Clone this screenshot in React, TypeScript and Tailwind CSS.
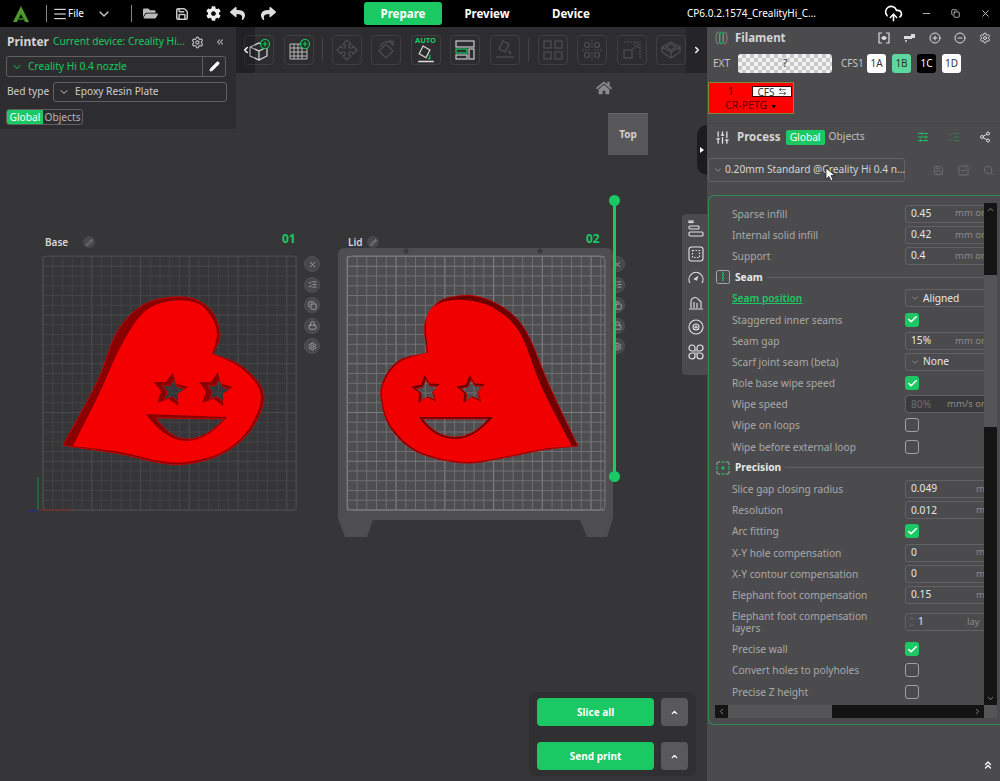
import React from "react";
import {
  Menu, ChevronDown, Save, Settings, CloudUpload, Minus, Copy, X,
  Pencil, Check, ChevronUp, ChevronLeft, ChevronRight, Search, CirclePlus, CircleMinus,
  SlidersVertical, ChevronsUp, ChevronsLeft, ArrowLeftRight, Share2, ListChecks, Lock,
} from "lucide-react";
import { FaCog, FaFolderOpen, FaHome, FaReply, FaShare } from "react-icons/fa";

type P = [number, number];

function smooth(pts: P[]): string {
  let d = "";
  for (let i = 0; i < pts.length - 1; i++) {
    const p0 = pts[i - 1] || pts[i];
    const p1 = pts[i];
    const p2 = pts[i + 1];
    const p3 = pts[i + 2] || p2;
    const c1 = [p1[0] + (p2[0] - p0[0]) / 6, p1[1] + (p2[1] - p0[1]) / 6];
    const c2 = [p2[0] - (p3[0] - p1[0]) / 6, p2[1] - (p3[1] - p1[1]) / 6];
    d += `C${c1[0].toFixed(1)} ${c1[1].toFixed(1)} ${c2[0].toFixed(1)} ${c2[1].toFixed(1)} ${p2[0]} ${p2[1]}`;
  }
  return d;
}
const closed = (...segs: P[][]) => `M${segs[0][0][0]} ${segs[0][0][1]}` + segs.map(smooth).join("") + "Z";

function star(cx: number, cy: number, r: number, rot: number) {
  let d = "";
  for (let i = 0; i < 10; i++) {
    const a = rot + (i * Math.PI) / 5 - Math.PI / 2;
    const rr = i % 2 ? r * 0.5 : r;
    d += `${i ? "L" : "M"}${(cx + rr * Math.cos(a)).toFixed(1)} ${(cy + rr * Math.sin(a)).toFixed(1)}`;
  }
  return d + "Z";
}

function Grid({ x0, y0, x1, y1, thin, bold }: { x0: number; y0: number; x1: number; y1: number; thin: string; bold: string }) {
  const step = 9.75;
  const lines: React.ReactNode[] = [];
  for (let i = 0; x0 + i * step <= x1 + 0.5; i++) {
    const x = x0 + i * step;
    lines.push(<line key={"v" + i} x1={x} x2={x} y1={y0} y2={y1} stroke={i % 5 === 0 ? bold : thin} strokeWidth={i % 5 === 0 ? 1.2 : 1} />);
  }
  for (let i = 0; y1 - i * step >= y0 - 0.5; i++) {
    const y = y1 - i * step;
    lines.push(<line key={"h" + i} y1={y} y2={y} x1={x0} x2={x1} stroke={i % 5 === 0 ? bold : thin} strokeWidth={i % 5 === 0 ? 1.2 : 1} />);
  }
  return <g>{lines}<rect x={x0} y={y0} width={x1 - x0} height={y1 - y0} rx={5} fill="none" stroke={bold} strokeWidth={1} /></g>;
}

function Hearts() {
  const baseSil = closed(
    [[63, 445], [97, 382], [117, 332], [143, 305], [173, 297], [197, 300], [213, 313], [220, 335], [213, 354]],
    [[213, 354], [240, 365], [260, 385], [263, 405], [247, 435], [220, 455], [187, 464], [160, 463], [120, 454], [73, 447], [63, 445]]
  );
  const baseFace = closed(
    [[73, 446], [100, 392], [120, 348], [143, 313], [170, 301], [197, 303], [212, 318], [217, 335], [212, 354]],
    [[212, 354], [238, 366], [257, 385], [260, 405], [245, 434], [220, 453], [187, 462], [160, 461], [120, 452], [73, 446]]
  );
  const baseMouthOuter = "M146 414L227 417C215 432 200 441 187 441C172 441 157 430 146 414Z";
  const baseMouthInner = "M156 418L224 419C212 432 200 439 187 439C174 439 165 430 156 418Z";
  const lidSil = closed(
    [[578, 446], [550, 387], [527, 333], [507, 310], [480, 297], [457, 296], [437, 303], [425, 323], [427, 353]],
    [[427, 353], [400, 360], [385, 377], [381, 397], [390, 427], [417, 452], [463, 463], [503, 458], [543, 450], [578, 446]]
  );
  const lidFace = closed(
    [[572, 446], [543, 390], [520, 333], [497, 310], [477, 302], [453, 300], [433, 307], [426, 323], [428, 353]],
    [[428, 353], [401, 361], [386, 378], [382, 397], [391, 426], [418, 451], [463, 462], [503, 457], [543, 449], [572, 446]]
  );
  const lidMouthOuter = "M419 417L493 417C480 432 468 439 455 439C440 439 427 430 419 417Z";
  const lidMouthInner = "M423 419L488 419C478 431 467 437 455 437C442 437 431 430 423 419Z";
  return (
    <>
      <path fillRule="evenodd" fill="#8a0000" stroke="#d80000" strokeWidth={0.8}
        d={baseSil + star(173, 391, 12, 0.15) + star(218, 391, 12, 0.15) + baseMouthInner} />
      <path fillRule="evenodd" fill="#f50000"
        d={baseFace + star(170, 390, 18, 0.15) + star(215, 390, 18, 0.15) + baseMouthOuter} />
      <path fillRule="evenodd" fill="#6e0000" stroke="#d00000" strokeWidth={0.8}
        d={lidSil + star(427, 391, 11.5, -0.1) + star(472, 391, 11.5, -0.1) + lidMouthInner} />
      <path fillRule="evenodd" fill="#f00000"
        d={lidFace + star(426, 390, 15, -0.1) + star(471, 390, 15, -0.1) + lidMouthOuter} />
    </>
  );
}

function Scene() {
  return (
    <svg className="absolute left-0 top-[-27px]" width={707} height={781} viewBox="0 0 707 781">
      <Grid x0={43} y0={256} x1={296} y1={510} thin="#434345" bold="#4a4a4d" />
      <line x1={38} y1={510} x2={38} y2={477} stroke="#1d8a3c" strokeWidth={1} />
      <line x1={38} y1={510} x2={70} y2={510} stroke="#8a2020" strokeWidth={1} />
      <line x1={38} y1={510} x2={27} y2={512} stroke="#2030a0" strokeWidth={1.2} />
      <path d="M345 248H606Q613 248 613 255V518L607 537H587L580 520H373L367 537H345L338 518V255Q338 248 345 248Z" fill="#4e4e50" />
      <circle cx={406} cy={251} r={2.5} fill="#3a3a3c" />
      <circle cx={540} cy={251} r={2.5} fill="#3a3a3c" />
      <Grid x0={347.3} y0={256} x1={605} y1={510} thin="#707073" bold="#7d7d80" />
      <Hearts />
    </svg>
  );
}

const CIRCLE_YS = [
  { k: "x", i: <X size={9} /> },
  { k: "a", i: <ListChecks size={9} /> },
  { k: "b", i: <Copy size={9} /> },
  { k: "c", i: <Lock size={9} /> },
  { k: "d", i: <Settings size={9} /> },
];

function PlateButtons({ className }: { className: string }) {
  return (
    <div className={"absolute flex flex-col gap-[4.5px] " + className}>
      {CIRCLE_YS.map((c) => (
        <div key={c.k} className="w-4 h-4 rounded-full bg-[#48484a] border border-[#525254] flex items-center justify-center text-[#b5b5b5]">{c.i}</div>
      ))}
    </div>
  );
}

function TB({ children, dim }: { children: React.ReactNode; dim?: boolean }) {
  return (
    <div className={"w-[30px] h-[30px] shrink-0 rounded-[4px] border border-[#404042] flex items-center justify-center " + (dim ? "text-[#4f4f52]" : "text-[#d8d8d8]")}>
      {children}
    </div>
  );
}

function Toolbar() {
  return (
    <div className="absolute left-[236px] top-0 w-[471px] h-[46px] bg-[#2d2d2f] flex items-center">
      <div className="w-[8px] h-full shrink-0" />
      <div className="flex items-center gap-[9.5px]">
        <TB>
          <svg width="24" height="24" viewBox="0 0 24 24" fill="none" stroke="#ddd" strokeWidth="1.2">
            <path d="M3 9l9-4 8 4v9l-8 4-9-4z M3 9l9 4 8-4 M12 13v9" />
            <circle cx="18" cy="6" r="4.5" fill="#1f2f25" stroke="#1ac964" />
            <path d="M18 3.5v5M15.5 6h5" stroke="#1ac964" />
          </svg>
        </TB>
        <TB>
          <svg width="24" height="24" viewBox="0 0 24 24" fill="none" stroke="#bbb" strokeWidth="1">
            <path d="M3 6h17v15H3zM3 10h17M3 14h17M3 18h17M7 6v15M11 6v15M15 6v15" />
            <circle cx="18" cy="6" r="4.5" fill="#1f2f25" stroke="#1ac964" strokeWidth="1.2" />
            <path d="M18 3.5v5M15.5 6h5" stroke="#1ac964" strokeWidth="1.2" />
          </svg>
        </TB>
        <div className="w-px h-[24px] bg-[#444446] -mx-[1px]" />
        <TB dim>
          <svg width="22" height="22" viewBox="0 0 22 22" fill="none" stroke="currentColor" strokeWidth="1.2">
            <path d="M11 1l4 4-2 1v3h3l1-2 4 4-4 4-1-2h-3v3l2 1-4 4-4-4 2-1v-3H6l-1 2-4-4 4-4 1 2h3V6L7 5z" />
          </svg>
        </TB>
        <TB dim>
          <svg width="22" height="22" viewBox="0 0 22 22" fill="none" stroke="currentColor" strokeWidth="1.2">
            <path d="M4 12l7-7 7 7-7 7z" /><path d="M5 8a8 8 0 0 1 10-5" /><path d="M14 2h4v4z" />
          </svg>
        </TB>
        <div className="w-[30px] h-[30px] shrink-0 rounded-[4px] border border-[#404042] flex flex-col items-center leading-none overflow-hidden">
          <span className="text-[7.5px] font-bold text-[#1ac964] mt-[1px]">AUTO</span>
          <svg width="24" height="20" viewBox="0 0 24 20" fill="none" stroke="#ddd" strokeWidth="1.2">
            <path d="M9 1l7 4-4 8-7-4z" /><path d="M4 17h16" strokeWidth="1.5" /><path d="M16 10v4h-2" stroke="#1ac964" />
          </svg>
        </div>
        <TB>
          <svg width="22" height="22" viewBox="0 0 22 22" fill="none" stroke="#ccc" strokeWidth="1.2">
            <rect x="2" y="2" width="18" height="6" />
            <rect x="2" y="10" width="11" height="4" stroke="#1ac964" />
            <rect x="2" y="16" width="11" height="4" />
            <rect x="15" y="10" width="5" height="10" />
          </svg>
        </TB>
        <TB dim>
          <svg width="22" height="22" viewBox="0 0 22 22" fill="none" stroke="currentColor" strokeWidth="1.2">
            <path d="M9 2l6 3-4 8-6-3z" /><path d="M2 18h18" /><path d="M14 12l3 2-2 1" />
          </svg>
        </TB>
        <div className="w-px h-[24px] bg-[#444446] -mx-[1px]" />
        <TB dim>
          <svg width="22" height="22" viewBox="0 0 22 22" fill="none" stroke="currentColor" strokeWidth="1.2">
            <rect x="2" y="2" width="7" height="7" /><rect x="13" y="2" width="7" height="7" /><rect x="2" y="13" width="7" height="7" /><rect x="13" y="13" width="7" height="7" />
          </svg>
        </TB>
        <TB dim>
          <svg width="22" height="22" viewBox="0 0 22 22" fill="none" stroke="currentColor" strokeWidth="1.2">
            <circle cx="6" cy="6" r="2.5" /><circle cx="16" cy="6" r="2.5" /><circle cx="6" cy="16" r="2.5" /><circle cx="16" cy="16" r="2.5" /><path d="M1 11h8M13 11h8M11 1v8M11 13v8" strokeDasharray="2 1" />
          </svg>
        </TB>
        <TB dim>
          <svg width="22" height="22" viewBox="0 0 22 22" fill="none" stroke="currentColor" strokeWidth="1.2">
            <rect x="3" y="11" width="8" height="8" /><path d="M3 3h16v16M12 10l5-5M13 5h4v4" strokeDasharray="2 1" />
          </svg>
        </TB>
        <TB dim>
          <svg width="22" height="22" viewBox="0 0 22 22" fill="none" stroke="currentColor" strokeWidth="1.2">
            <path d="M2 8l9-5 9 5-9 5zM2 8v5l9 6 9-6V8M6 8l5-3 5 3-5 3zM11 13v6" />
          </svg>
        </TB>
      </div>
      <div className="absolute right-0 top-0 w-[21px] h-full bg-[#252527] flex items-center pl-[6px] text-white"><ChevronRight size={10} strokeWidth={3.5} /></div>
      <div className="absolute left-0 top-0 w-[19px] h-full bg-black/25 flex items-center pl-[5px] text-white"><ChevronLeft size={10} strokeWidth={3.5} /></div>
    </div>
  );
}

function LeftPanel() {
  return (
    <div className="absolute left-0 top-0 w-[236px] h-[102px] bg-[#2d2d2f] px-[6px] pt-[6px] flex flex-col">
      <div className="flex items-center h-[18px] whitespace-nowrap">
        <span className="text-[12px] font-bold text-[#d4d4d4] ml-[1px] w-[46px]">Printer</span>
        <span className="text-[10.2px] text-[#1ac964] w-[133px]">Current device: Creality Hi...</span>
        <Settings size={13} className="text-[#c5c5c5] ml-[5px]" />
        <ChevronsLeft size={10} strokeWidth={2.5} className="text-[#bbb] ml-[11px]" />
      </div>
      <div className="flex mt-[5px] h-[21px] w-[220px] border border-[#606062] rounded-[3px] items-center">
        <ChevronDown size={12} className="text-[#1ac964] ml-[4px]" />
        <span className="text-[10.2px] text-[#1ac964] ml-[5px] flex-1">Creality Hi 0.4 nozzle</span>
        <div className="w-[23px] h-full border-l border-[#606062] flex items-center justify-center"><Pencil size={11} className="text-white" fill="white" /></div>
      </div>
      <div className="flex items-center mt-[5px] h-[20px]">
        <span className="text-[10.2px] text-[#cfcfcf] ml-[1px] w-[46px]">Bed type</span>
        <div className="flex items-center h-full w-[174px] border border-[#606062] rounded-[3px]">
          <ChevronDown size={12} className="text-[#ccc] ml-[4px]" />
          <span className="text-[10.2px] text-[#cfcfcf] ml-[5px]">Epoxy Resin Plate</span>
        </div>
      </div>
      <div className="flex mt-[7px] h-[16px] w-[77px] text-[10.2px] leading-[14px] rounded-[3px] border border-[#606062]">
        <span className="bg-[#1ac964] text-white w-[36px] text-center rounded-l-[2px]">Global</span>
        <span className="text-[#b5b5b5] flex-1 text-center">Objects</span>
      </div>
    </div>
  );
}

function Canvas() {
  return (
    <div className="relative w-[707px] h-full bg-[#363638] overflow-hidden shrink-0">
      <Scene />
      <Toolbar />
      <LeftPanel />
      <div className="absolute left-[45px] top-[210px] text-[10px] font-semibold text-[#d8d8d8] leading-none">Base</div>
      <div className="absolute left-[83px] top-[209px] w-3 h-3 rounded-full bg-[#48484a] flex items-center justify-center text-[#999]"><Pencil size={7} /></div>
      <div className="absolute left-[282px] top-[206px] text-[12px] font-bold text-[#1ac964] leading-none">01</div>
      <div className="absolute left-[348px] top-[210px] text-[10px] font-semibold text-[#d8d8d8] leading-none">Lid</div>
      <div className="absolute left-[367px] top-[209px] w-3 h-3 rounded-full bg-[#48484a] flex items-center justify-center text-[#aaa]"><Pencil size={7} /></div>
      <div className="absolute left-[586px] top-[206px] text-[12px] font-bold text-[#1ac964] leading-none">02</div>
      <PlateButtons className="left-[304px] top-[229px]" />
      <PlateButtons className="left-[609px] top-[229px]" />
      <div className="absolute left-[613px] top-[174px] w-[3px] h-[275px] bg-[#1ac964]" />
      <div className="absolute left-[609px] top-[168px] w-[11px] h-[11px] rounded-full bg-[#1ac964]" />
      <div className="absolute left-[609px] top-[444px] w-[11px] h-[11px] rounded-full bg-[#1ac964]" />
      <FaHome size={16} className="absolute left-[596px] top-[53px] text-[#8a8a8a]" />
      <div className="absolute left-[608px] top-[86px] w-[40px] h-[42px] bg-[#58585a] border-t border-[#6a6a6c] flex items-center justify-center text-[10px] font-bold text-[#d0d0d0]">Top</div>
      <div className="absolute left-[697px] top-[98px] w-[20px] h-[50px] rounded-full bg-[#1c1c1e] flex items-center pl-[3px]">
        <div className="w-0 h-0 border-y-[3px] border-y-transparent border-l-[4px] border-l-white" />
      </div>
      <div className="absolute left-[682px] top-[187px] w-[25px] h-[161px] bg-[#4b4b4d] rounded-l-[4px] flex flex-col items-center text-[#e5e5e5] gap-[9px] pt-[6px] pl-[2px]">
        <svg width="16" height="17" viewBox="0 0 16 17" fill="none" stroke="currentColor" strokeWidth="1.1"><rect x="1" y="1" width="4" height="1.5" /><rect x="1" y="6" width="10" height="3" rx="1" /><rect x="1" y="12" width="14" height="4" rx="1" /></svg>
        <svg width="16" height="16" viewBox="0 0 16 16" fill="none" stroke="currentColor" strokeWidth="1.1"><rect x="1" y="1" width="14" height="14" rx="2.5" /><rect x="4.5" y="4.5" width="7" height="7" strokeDasharray="1.5 1.5" /></svg>
        <svg width="16" height="14" viewBox="0 0 16 14" fill="none" stroke="currentColor" strokeWidth="1.1"><path d="M2 12a7 7 0 1 1 12 0" /><path d="M6.5 8l3-2-1 3z" /></svg>
        <svg width="16" height="16" viewBox="0 0 16 16" fill="none" stroke="currentColor" strokeWidth="1.1"><path d="M1 15h14M3 14V7a4 4 0 0 1 7-2l3 3v6M6 14V8M9 14V9" /></svg>
        <svg width="16" height="16" viewBox="0 0 16 16" fill="none" stroke="currentColor" strokeWidth="1.1"><circle cx="8" cy="8" r="7" /><circle cx="8" cy="8" r="3" /><circle cx="8" cy="8" r="1" /></svg>
        <svg width="16" height="16" viewBox="0 0 16 16" fill="none" stroke="currentColor" strokeWidth="1.2"><path d="M7 7H4a3 3 0 1 1 3-3zM9 7V4a3 3 0 1 1 3 3zM7 9v3a3 3 0 1 1-3-3zM9 9h3a3 3 0 1 1-3 3z" /></svg>
      </div>
      <div className="absolute left-[529px] top-[665px] w-[167px] flex flex-col gap-[4px] bg-[#303032] rounded-[6px]">
        {["Slice all", "Send print"].map((t) => (
          <div key={t} className="flex items-center h-[40px] px-[8px] gap-[7px]">
            <div className="w-[118px] h-[28px] rounded-[4px] bg-[#1ac964] flex items-center justify-center text-[10px] font-bold text-white">{t}</div>
            <div className="w-[27px] h-[28px] rounded-[4px] bg-[#59595b] flex items-center justify-center text-white"><ChevronUp size={9} strokeWidth={3.5} /></div>
          </div>
        ))}
      </div>
    </div>
  );
}

function Slot({ t, cls }: { t: string; cls: string }) {
  return <div className={"w-[19px] h-[19px] rounded-[3px] flex items-center justify-center text-[10px] " + cls}>{t}</div>;
}

function Label({ children, extra }: { children: React.ReactNode; extra?: string }) {
  return <div className={"w-[190px] pl-[17px] pr-[36px] text-[10.2px] leading-[12px] text-[#a9a9a9] shrink-0 " + (extra || "")}>{children}</div>;
}

function NumRow({ label, value, unit, vw, dim }: { label: string; value: string; unit: string; vw: string; dim?: boolean }) {
  return (
    <div className="flex items-center h-[21.2px]">
      <Label>{label}</Label>
      <div className={"w-[90px] h-[18px] shrink-0 rounded-[3px] border border-[#626264] flex items-center pl-[5px] text-[10.2px] whitespace-nowrap " + (dim ? "bg-[#3a3a3c] text-[#6e6e70]" : "text-[#e8e8e8]")}>
        <span className={"shrink-0 " + vw}>{value}</span>
        <span className="text-[#8a8a8c] text-[9.5px]">{unit}</span>
      </div>
    </div>
  );
}

function CheckRow({ label, on }: { label: string; on?: boolean }) {
  return (
    <div className="flex items-center h-[21.2px]">
      <Label>{label}</Label>
      {on ? (
        <div className="w-[14px] h-[14px] rounded-[3px] bg-[#1ac964] flex items-center justify-center"><Check size={11} strokeWidth={3.5} className="text-white" /></div>
      ) : (
        <div className="w-[14px] h-[14px] rounded-[3px] border border-[#a0a0a0]" />
      )}
    </div>
  );
}

function SelectRow({ label, value, green }: { label: string; value: string; green?: boolean }) {
  return (
    <div className="flex items-center h-[21.2px]">
      <Label extra={green ? "!text-[#1ac964] underline font-semibold" : ""}>{label}</Label>
      <div className="w-[90px] h-[18px] shrink-0 rounded-[3px] border border-[#626264] flex items-center pl-[4px] text-[10.2px] text-[#e8e8e8]">
        <ChevronDown size={10} className="text-[#999]" />
        <span className="ml-[3px]">{value}</span>
      </div>
    </div>
  );
}

function SectionHead({ title, children }: { title: string; children: React.ReactNode }) {
  return (
    <div className="flex items-center h-[21.2px] pl-[1px]">
      <div className="w-[14px] h-[14px] flex items-center justify-center">{children}</div>
      <span className="ml-[5px] text-[10.2px] font-bold text-[#e8e8e8]">{title}</span>
      <div className="flex-1 h-px bg-[#626264] ml-[4px]" />
    </div>
  );
}

function Sidebar() {
  return (
    <div className="flex-1 h-full bg-[#4b4b4d] flex flex-col relative">
      <div className="h-[21px] flex items-center pl-[8px] text-[#d5d5d5]">
        <svg width="13" height="14" viewBox="0 0 13 14" fill="none" stroke="#1ac964" strokeWidth="1"><ellipse cx="3" cy="7" rx="2" ry="6" stroke="#888" /><ellipse cx="6.5" cy="7" rx="2" ry="6" /><ellipse cx="10" cy="7" rx="2" ry="6" stroke="#888" /></svg>
        <span className="ml-[7px] text-[11.5px] font-bold">Filament</span>
        <div className="ml-auto flex items-center gap-[13px] pr-[9px] text-[#dcdcdc]">
          <svg width="12" height="12" viewBox="0 0 12 12" fill="none" stroke="currentColor" strokeWidth="1.2"><path d="M4 1H1v10h3M8 1h3v10H8M3 6h6" /><circle cx="6" cy="6" r="1.5" fill="currentColor" /></svg>
          <svg width="13" height="12" viewBox="0 0 13 12" fill="currentColor"><path d="M1 4h7V2h4v4H9v1H1zM2 8h2l-1 3z" /></svg>
          <CirclePlus size={12} />
          <CircleMinus size={12} />
          <Settings size={12} />
        </div>
      </div>
      <div className="flex items-center h-[19px] mt-[6px] text-[10px] text-[#c5c5c5]">
        <span className="ml-[6px] w-[25px]">EXT</span>
        <div className="w-[94px] h-[19px] rounded-[3px] bg-[repeating-conic-gradient(#c8c8c8_0_25%,#f2f2f2_0_50%)] bg-[length:8px_8px] flex items-center justify-center text-[#333]">?</div>
        <span className="ml-[9px] w-[26px]">CFS1</span>
        <div className="flex gap-[6px]">
          <Slot t="1A" cls="bg-white text-[#333]" />
          <Slot t="1B" cls="bg-[#5ed6a0] text-[#1d3b2c]" />
          <Slot t="1C" cls="bg-black text-white" />
          <Slot t="1D" cls="bg-white text-[#333]" />
        </div>
      </div>
      <div className="mt-[9px] ml-[1px] w-[86px] h-[32px] bg-[#ff0000] border border-[#7f8a3a] relative text-[10px] flex flex-col">
        <div className="flex h-[15px] items-center pt-[2px]">
          <span className="w-[43px] text-center text-[#300]">1</span>
          <div className="w-[40px] h-[11px] bg-white border border-[#400] flex items-center justify-center gap-[3px] text-[#333] leading-none">CFS <ArrowLeftRight size={9} /></div>
        </div>
        <div className="text-center text-[#5a0000] leading-[15px] text-[10.5px]">CR-PETG <span className="text-black text-[7px]">▼</span></div>
      </div>
      <div className="h-px bg-[#444446] mt-[9px]" />
      <div className="flex items-center h-[26px] pl-[8px]">
        <SlidersVertical size={15} className="text-[#e8e8e8]" />
        <span className="ml-[7px] text-[11.5px] font-bold text-[#d5d5d5]">Process</span>
        <span className="ml-[5px] w-[39px] h-[15px] rounded-[2px] bg-[#1ac964] text-white text-[10.2px] leading-[15px] text-center">Global</span>
        <span className="ml-[4px] text-[10.2px] text-[#c0c0c0]">Objects</span>
        <div className="ml-auto flex items-center gap-[19px] pr-[9px]">
          <SlidersVertical size={12} className="text-[#1ac964] rotate-90" />
          <ListChecks size={12} className="text-[#1ac964] opacity-40" />
          <Share2 size={12} className="text-[#dcdcdc]" />
        </div>
      </div>
      <div className="flex items-center mt-[8px] h-[24px]">
        <div className="w-[197px] ml-[1px] h-full rounded-[3px] border border-[#626264] flex items-center pl-[4px] text-[10.2px] text-[#d5d5d5] whitespace-nowrap">
          <ChevronDown size={10} className="text-[#999] shrink-0" />
          <span className="ml-[2px]">0.20mm Standard @Creality Hi 0.4 n...</span>
        </div>
        <div className="ml-auto flex gap-[14px] pr-[6px] text-[#6f6f71]">
          <Save size={11} /><svg width="11" height="11" viewBox="0 0 11 11" fill="none" stroke="currentColor"><rect x="1" y="1" width="9" height="9" rx="1" /><path d="M3 5.5h5" /></svg><Search size={11} />
        </div>
      </div>
      <div className="mt-[13px] ml-[1px] w-[292px] h-[530px] rounded-tl-[6px] rounded-bl-[6px] border border-r-0 border-[#2f8a55] pl-[6px] pt-[7px] flex flex-col relative">
        <div className="flex flex-1 min-h-0">
          <div className="w-[269px] overflow-hidden">
            <NumRow label="Sparse infill" value="0.45" unit="mm or" vw="w-[44px]" />
            <NumRow label="Internal solid infill" value="0.42" unit="mm or" vw="w-[44px]" />
            <NumRow label="Support" value="0.4" unit="mm or" vw="w-[44px]" />
            <SectionHead title="Seam">
              <svg width="14" height="14" viewBox="0 0 14 14" fill="none"><rect x="0.5" y="0.5" width="13" height="13" rx="2" stroke="#a8a8a8" /><path d="M6 2l2 1.5-2 1.5 2 1.5-2 1.5 2 1.5-2 1.5" stroke="#1ac964" /></svg>
            </SectionHead>
            <SelectRow label="Seam position" value="Aligned" green />
            <CheckRow label="Staggered inner seams" on />
            <NumRow label="Seam gap" value="15%" unit="mm or" vw="w-[44px]" />
            <SelectRow label="Scarf joint seam (beta)" value="None" />
            <CheckRow label="Role base wipe speed" on />
            <NumRow label="Wipe speed" value="80%" unit="mm/s or" vw="w-[36px]" dim />
            <CheckRow label="Wipe on loops" />
            <CheckRow label="Wipe before external loop" />
            <SectionHead title="Precision">
              <svg width="14" height="14" viewBox="0 0 14 14" fill="none"><path d="M1 4V2a1 1 0 0 1 1-1h2M10 1h2a1 1 0 0 1 1 1v2M13 10v2a1 1 0 0 1-1 1h-2M4 13H2a1 1 0 0 1-1-1v-2" stroke="#a8a8a8" /><path d="M5 1h4M5 13h4M1 5v4M13 5v4M7 5v4M5 7h4" stroke="#1ac964" /></svg>
            </SectionHead>
            <NumRow label="Slice gap closing radius" value="0.049" unit="m" vw="w-[65px]" />
            <NumRow label="Resolution" value="0.012" unit="m" vw="w-[65px]" />
            <CheckRow label="Arc fitting" on />
            <NumRow label="X-Y hole compensation" value="0" unit="m" vw="w-[65px]" />
            <NumRow label="X-Y contour compensation" value="0" unit="m" vw="w-[65px]" />
            <NumRow label="Elephant foot compensation" value="0.15" unit="m" vw="w-[65px]" />
            <div className="flex items-center h-[33px]">
              <Label>Elephant foot compensation layers</Label>
              <div className="w-[90px] h-[18px] shrink-0 rounded-[3px] border border-[#626264] flex items-center pl-[2px] text-[10.2px] text-[#e8e8e8] whitespace-nowrap">
                <div className="flex flex-col text-[#888] mr-[3px]"><ChevronUp size={7} /><ChevronUp size={7} className="rotate-180" /></div>
                <span className="w-[49px]">1</span>
                <span className="text-[#8a8a8c] text-[9.5px]">lay</span>
              </div>
            </div>
            <CheckRow label="Precise wall" on />
            <CheckRow label="Convert holes to polyholes" />
            <CheckRow label="Precise Z height" />
          </div>
          <div className="w-[13px] bg-[#141414] flex flex-col items-center justify-between relative shrink-0">
            <ChevronUp size={9} className="text-[#aaa] mt-[2px]" />
            <ChevronDown size={9} className="text-[#aaa] mb-[2px]" />
            <div className="absolute top-[72px] h-[152px] w-full bg-[#555557]" />
          </div>
        </div>
        <div className="flex h-[13px] mb-[6px] shrink-0">
          <div className="w-[269px] bg-[#141414] flex items-center justify-between relative px-[2px] text-[#aaa]">
            <ChevronLeft size={9} /><ChevronRight size={9} />
            <div className="absolute left-[13px] w-[104px] h-full bg-[#555557]" />
          </div>
          <div className="w-[13px] bg-[#555557]" />
        </div>
      </div>
      <ChevronsUp size={12} className="absolute left-[275px] top-[732px] text-white" strokeWidth={2.5} />
      <svg className="absolute left-[118px] top-[140px]" width="11" height="15" viewBox="0 0 11 15">
        <path d="M1 1v11l3-2.5 2 4.5 2-1-2-4.5h4z" fill="white" stroke="#222" strokeWidth="0.8" />
      </svg>
    </div>
  );
}

function TopBar() {
  return (
    <div className="h-[27px] bg-black flex items-center text-white relative shrink-0">
      <svg width="18" height="18" viewBox="0 0 18 18" className="ml-[12px]" fill="none">
        <path d="M9 1L1 17h4l4-8 4 8h4z" fill="#4d9a2c" /><path d="M6 13h6l1 2H5z" fill="#2f6b1d" />
      </svg>
      <div className="w-px h-[17px] bg-[#888] ml-[16px]" />
      <Menu size={16} className="ml-[5px]" strokeWidth={1.5} />
      <span className="text-[10px] w-[14px]">File</span>
      <ChevronDown size={16} className="ml-[14px] text-[#ccc]" />
      <div className="w-px h-[17px] bg-[#888] ml-[19px]" />
      <FaFolderOpen size={15} className="ml-[11px] text-[#bbb]" />
      <Save size={14} className="ml-[17px] text-[#ccc]" strokeWidth={2.5} />
      <FaCog size={15} className="ml-[17px] text-[#eee]" />
      <FaReply size={15} className="ml-[9px] text-[#ddd]" />
      <FaShare size={15} className="ml-[16px] text-[#ddd]" />
      <div className="ml-[88px] w-[78px] h-[23px] rounded-[3px] bg-[#1ac964] flex items-center justify-center text-[11.5px] font-bold">Prepare</div>
      <div className="w-[90px] text-center text-[11.5px] font-bold">Preview</div>
      <div className="w-[78px] text-center text-[11.5px] font-bold">Device</div>
      <span className="ml-[77px] text-[10px] whitespace-nowrap w-[122px]">CP6.0.2.1574_CrealityHi_C...</span>
      <CloudUpload size={19} className="ml-[75px]" strokeWidth={2} />
      <Minus size={11} className="absolute left-[921px] top-[8px] text-[#bbb]" />
      <Copy size={9} className="absolute left-[951px] top-[9px] text-[#ddd]" />
      <X size={11} className="absolute left-[980px] top-[8px] text-[#ccc]" />
    </div>
  );
}

export default function App() {
  return (
    <div className="w-[1000px] h-[781px] overflow-hidden flex flex-col bg-[#363638] font-['Noto_Sans','Liberation_Sans',sans-serif]">
      <TopBar />
      <div className="flex flex-1 min-h-0">
        <Canvas />
        <Sidebar />
      </div>
    </div>
  );
}
